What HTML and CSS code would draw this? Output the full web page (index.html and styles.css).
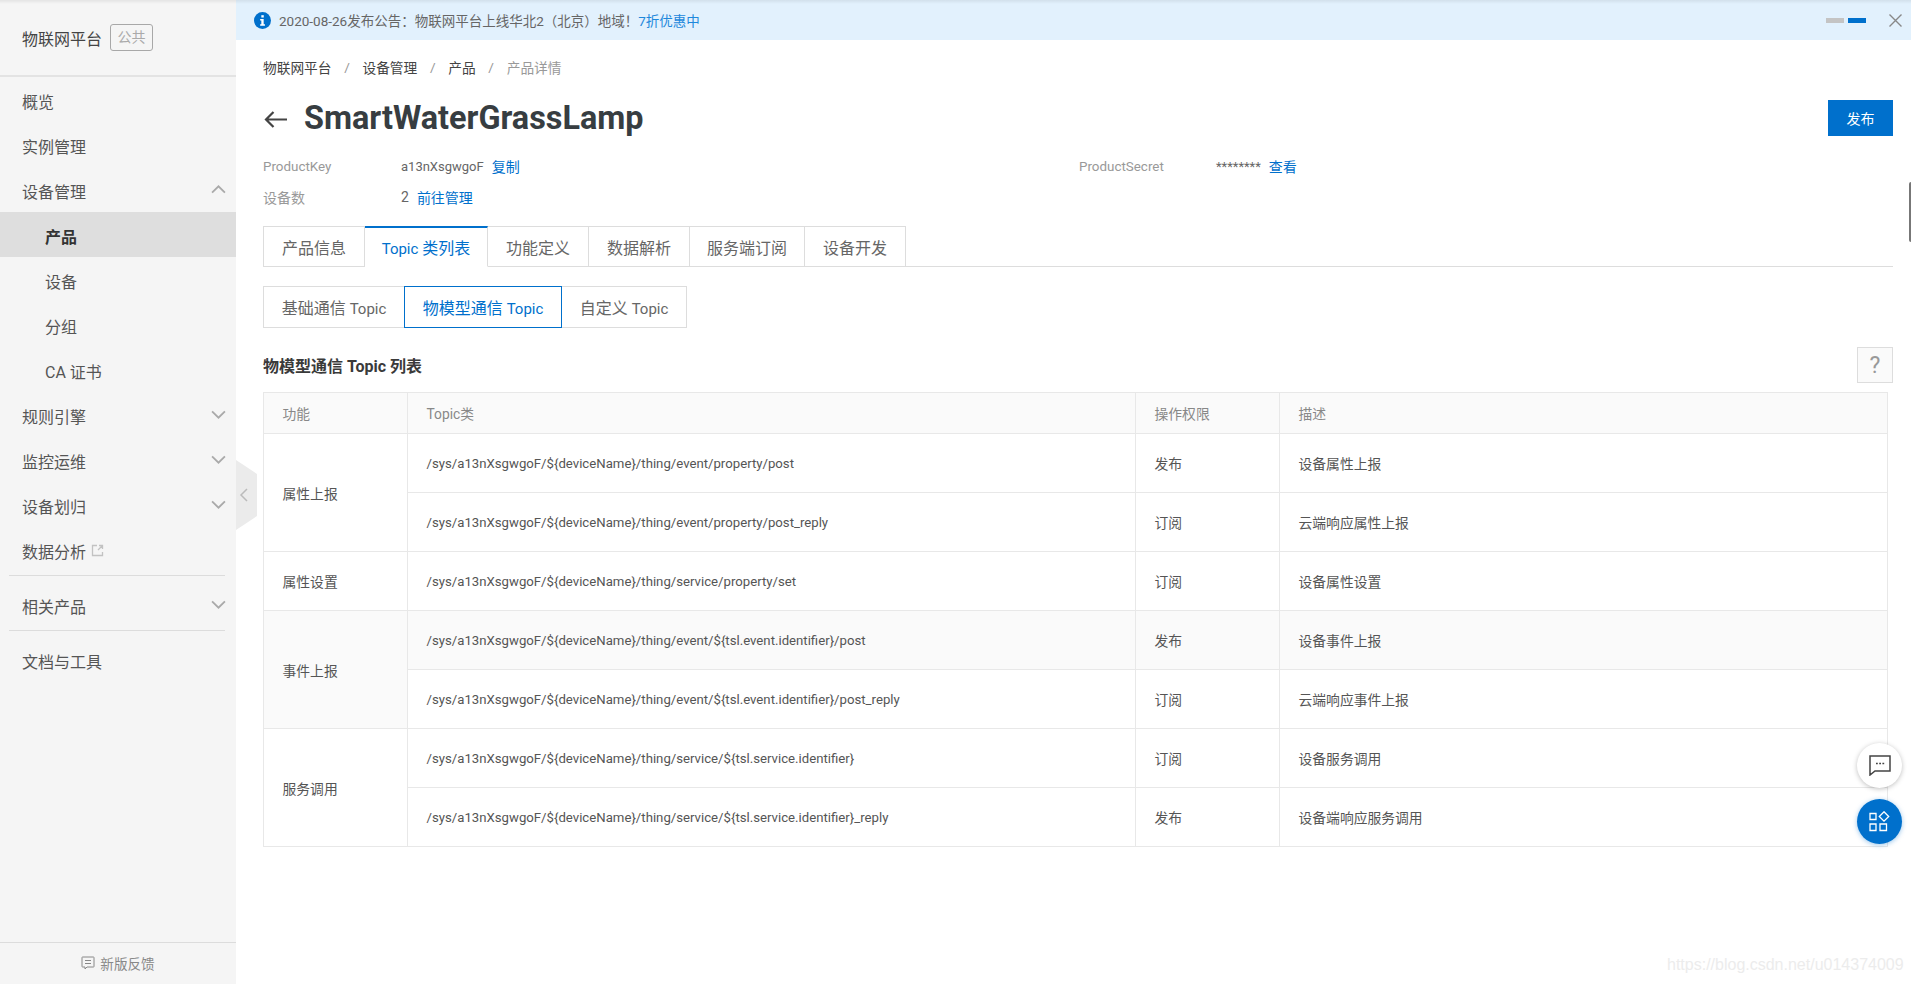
FILE: index.html
```html
<!DOCTYPE html>
<html lang="zh-CN">
<head>
<meta charset="utf-8">
<title>物联网平台</title>
<link rel="stylesheet" href="styles.css">
</head>
<body>
<div class="app">
  <aside class="sidebar">
    <div class="side-head"><span class="side-title">物联网平台</span><span class="side-badge">公共</span></div>
    <nav class="side-nav">
      <a class="nav-item">概览</a>
      <a class="nav-item">实例管理</a>
      <a class="nav-item">设备管理<svg class="chev" viewBox="0 0 14 8"><path d="M1 7l6-6 6 6"/></svg></a>
      <a class="nav-item sub active">产品</a>
      <a class="nav-item sub">设备</a>
      <a class="nav-item sub">分组</a>
      <a class="nav-item sub">CA 证书</a>
      <a class="nav-item">规则引擎<svg class="chev" viewBox="0 0 14 8"><path d="M1 1l6 6 6-6"/></svg></a>
      <a class="nav-item">监控运维<svg class="chev" viewBox="0 0 14 8"><path d="M1 1l6 6 6-6"/></svg></a>
      <a class="nav-item">设备划归<svg class="chev" viewBox="0 0 14 8"><path d="M1 1l6 6 6-6"/></svg></a>
      <a class="nav-item">数据分析<svg class="ext" viewBox="0 0 13 13"><path d="M6 1.500H1.500v10h10V8M8 1.500h3.500V5M11.500 1.500L7 6"/></svg></a>
      <div class="side-line"></div>
      <a class="nav-item">相关产品<svg class="chev" viewBox="0 0 14 8"><path d="M1 1l6 6 6-6"/></svg></a>
      <div class="side-line"></div>
      <a class="nav-item">文档与工具</a>
    </nav>
    <div class="feedback"><svg viewBox="0 0 14 14"><path d="M1.500 1h11a.500.500 0 0 1 .500.500v9a.500.500 0 0 1-.500.500H6l-2 2v-2H1.500a.500.500 0 0 1-.500-.500v-9a.500.500 0 0 1 .500-.500zM4 4.500h6M4 7.500h6"/></svg>新版反馈</div>
  </aside>
  <main class="main">
    <div class="notice">
      <svg class="info" viewBox="0 0 16 16"><circle cx="8" cy="8" r="8"/><rect x="6.900" y="3" width="2.300" height="2.200"/><path d="M5.800 6.600h3.300v5h1.200v1.400H5.800v-1.400h1.100V8H5.800z"/></svg>
      <span class="notice-text">2020-08-26发布公告：物联网平台上线华北2（北京）地域！<a class="link notice-link">7折优惠中</a></span>
      <span class="pager"><i></i><i class="on"></i></span>
      <svg class="close" viewBox="0 0 13 13"><path d="M.5.500l12 12M12.500.500l-12 12"/></svg>
    </div>
    <div class="content">
      <div class="crumbs"><span>物联网平台</span><em>/</em><span>设备管理</span><em>/</em><span>产品</span><em>/</em><span class="cur">产品详情</span></div>
      <div class="title-row">
        <svg class="back" viewBox="0 0 23 17"><path d="M23 8.500H2M9.500 1L2 8.500 9.500 16"/></svg>
        <h1>SmartWaterGrassLamp</h1>
        <button class="publish">发布</button>
      </div>
      <div class="meta">
        <div class="meta-row"><span class="meta-label lat">ProductKey</span><span class="meta-value">a13nXsgwgoF</span><a class="link gap">复制</a></div>
        <div class="meta-row"><span class="meta-label secret lat">ProductSecret</span><span class="meta-value">********</span><a class="link gap">查看</a></div>
        <div class="meta-row"><span class="meta-label">设备数</span><span class="meta-num">2</span><a class="link gap">前往管理</a></div>
      </div>
      <div class="tabs">
        <a class="tab w1">产品信息</a>
        <a class="tab w2 active"><span><span class="lat-word">Topic</span> 类列表</span></a>
        <a class="tab w3">功能定义</a>
        <a class="tab w4">数据解析</a>
        <a class="tab w5">服务端订阅</a>
        <a class="tab w6">设备开发</a>
      </div>
      <div class="subtabs">
        <a class="subtab s1"><span>基础通信 <span class="lat-word">Topic</span></span></a>
        <a class="subtab s2 active"><span>物模型通信 <span class="lat-word">Topic</span></span></a>
        <a class="subtab s3"><span>自定义 <span class="lat-word">Topic</span></span></a>
      </div>
      <div class="list-head"><h2>物模型通信 Topic 列表</h2><span class="help">?</span></div>
      <table class="grid">
        <colgroup><col class="c1"><col class="c2"><col class="c3"><col class="c4"></colgroup>
        <thead><tr><th>功能</th><th>Topic类</th><th>操作权限</th><th>描述</th></tr></thead>
        <tbody>
          <tr><td rowspan="2">属性上报</td><td class="path">/sys/a13nXsgwgoF/${deviceName}/thing/event/property/post</td><td>发布</td><td>设备属性上报</td></tr>
          <tr><td class="path">/sys/a13nXsgwgoF/${deviceName}/thing/event/property/post_reply</td><td>订阅</td><td>云端响应属性上报</td></tr>
          <tr><td>属性设置</td><td class="path">/sys/a13nXsgwgoF/${deviceName}/thing/service/property/set</td><td>订阅</td><td>设备属性设置</td></tr>
          <tr class="hover"><td rowspan="2">事件上报</td><td class="path">/sys/a13nXsgwgoF/${deviceName}/thing/event/${tsl.event.identifier}/post</td><td>发布</td><td>设备事件上报</td></tr>
          <tr><td class="path">/sys/a13nXsgwgoF/${deviceName}/thing/event/${tsl.event.identifier}/post_reply</td><td>订阅</td><td>云端响应事件上报</td></tr>
          <tr><td rowspan="2">服务调用</td><td class="path">/sys/a13nXsgwgoF/${deviceName}/thing/service/${tsl.service.identifier}</td><td>订阅</td><td>设备服务调用</td></tr>
          <tr><td class="path">/sys/a13nXsgwgoF/${deviceName}/thing/service/${tsl.service.identifier}_reply</td><td>发布</td><td>设备端响应服务调用</td></tr>
        </tbody>
      </table>
    </div>
  </main>
</div>
<div class="collapse"><svg viewBox="0 0 9 14"><path d="M8 1L2 7l6 6"/></svg></div>
<div class="top-shade"></div>
<div class="scroll-thumb"></div>
<button class="fab chat"><svg viewBox="0 0 22 21"><path d="M1 1h20v15H6l-5 4zM7 8.500h1.800M10.200 8.500H12M13.400 8.500h1.800"/></svg></button>
<button class="fab apps"><svg viewBox="0 0 22 21"><path d="M1 2.500h6v6H1zM1 13h6v6.500H1zM11 13h6.500v6.500H11zM15 .8l4.700 4.700L15 10.200l-4.700-4.700z"/></svg></button>
<div class="watermark">https://blog.csdn.net/u014374009</div>
</body>
</html>
```

FILE: styles.css
```css
* { box-sizing: border-box; }
html, body { margin: 0; height: 100%; overflow: hidden; background: #fff; }
body { font-family: Roboto, "Noto Sans CJK SC", sans-serif; font-weight: 400; color: #555; font-size: 14px; }
a { text-decoration: none; }
.link { color: #0070cc; }

.app { display: flex; height: 984px; }

.sidebar { width: 236px; flex: none; background: #f5f5f5; display: flex; flex-direction: column; }
.side-head { height: 77px; border-bottom: 2px solid #e3e3e3; padding: 0 0 0 22px; display: flex; align-items: center; gap: 8px; }
.side-title { font-size: 16px; color: #444; }
.side-badge { width: 43px; height: 27px; border: 1px solid #a8a8a8; border-radius: 3px; color: #aaa; font-size: 14px; line-height: 25px; text-align: center; }
.side-nav { flex: 1; }
.nav-item { display: flex; align-items: center; height: 45px; padding: 2px 0 0 22px; font-size: 16px; color: #555; position: relative; }
.nav-item.sub { padding-left: 45px; }
.nav-item.active { background: #dedede; color: #333; font-weight: 700; }
.chev { width: 15px; height: 9px; margin-left: auto; margin-right: 10px; margin-top: -2px; fill: none; stroke: #aaa; stroke-width: 1.700; }
.ext { width: 13px; height: 13px; margin-left: 5px; fill: none; stroke: #c2c2c2; stroke-width: 1.300; }
.side-line { height: 1px; margin: 3px 11px 6px 9px; background: #dcdcdc; }
.feedback { height: 42px; border-top: 1px solid #dcdcdc; padding-bottom: 2px; display: flex; align-items: center; justify-content: center; gap: 5px; color: #888; font-size: 13.600px; }
.feedback svg { width: 14px; height: 14px; fill: none; stroke: #888; stroke-width: 1; }

.main { flex: 1; min-width: 0; display: flex; flex-direction: column; }
.notice { height: 40px; flex: none; background: #e2f1fd; display: flex; align-items: center; padding-left: 18px; }
.info { width: 17px; height: 17px; fill: #0070cc; margin-right: 8px; }
.info rect, .info path { fill: #fff; }
.notice-text { color: #666; font-size: 13.500px; }
.notice-link { color: #1e88dc; }
.pager { margin-left: auto; display: flex; gap: 4px; margin-right: 23px; }
.pager i { width: 18px; height: 5px; background: #c4c4c4; }
.pager i.on { background: #0070cc; }
.close { width: 13px; height: 13px; margin-right: 9px; fill: none; stroke: #888; stroke-width: 1.400; }

.content { flex: 1; padding: 0 18px 0 27px; }
.crumbs { height: 54px; margin-bottom: 2px; display: flex; align-items: center; font-size: 13.700px; color: #444; }
.crumbs em { font-style: normal; color: #999; margin: 0 12.700px; }
.crumbs .cur { color: #999; }
.title-row { height: 44px; display: flex; align-items: center; }
.back { width: 23px; height: 17px; fill: none; stroke: #444; stroke-width: 2.200; margin: 2px 17px 0 1px; }
h1 { margin: 0; font-size: 32.400px; font-weight: 700; color: #373d41; line-height: 44px; }
.publish { margin-left: auto; width: 65px; height: 36px; background: #0070cc; color: #fff; border: 0; padding: 0; font: inherit; font-size: 14px; }
.meta { display: grid; grid-template-columns: 816px 1fr; row-gap: 11px; margin-top: 16px; height: 70px; align-content: start; }
.meta-row { display: flex; align-items: center; height: 20px; color: #666; font-size: 14px; }
.meta-label { width: 138px; color: #999; font-size: 14px; }
.meta-label.lat { font-size: 13.400px; }
.meta-label.secret { width: 137px; }
.meta-value { font-size: 13px; }
.meta-num { font-size: 14px; }
.gap { margin-left: 8px; }
.lat-word { font-size: 15px; }
.tabs { display: flex; height: 41px; border-bottom: 1px solid #ddd; }
.tab { height: 41px; border: 1px solid #ddd; border-left: 0; font-size: 16px; color: #666; display: flex; align-items: center; justify-content: center; }
.tab.w1 { width: 102px; border-left: 1px solid #ddd; }
.tab.w2 { width: 123px; }
.tab.w3 { width: 101px; }
.tab.w4 { width: 101px; }
.tab.w5 { width: 115px; }
.tab.w6 { width: 101px; }
.tab.active { color: #0070cc; border-top: 2px solid #0070cc; border-bottom-color: #fff; }
.subtabs { display: flex; height: 42px; margin-top: 19px; }
.subtab { height: 42px; border: 1px solid #ddd; font-size: 16px; color: #666; display: flex; align-items: center; justify-content: center; }
.subtab.s1 { width: 141px; border-right: 0; }
.subtab.s2 { width: 158px; }
.subtab.s3 { width: 125px; border-left: 0; }
.subtab.active { color: #0070cc; border-color: #0070cc; }
.list-head { height: 36px; margin-top: 19px; display: flex; align-items: center; justify-content: space-between; }
h2 { margin: 0; font-size: 16px; font-weight: 700; color: #3a3a3a; }
.help { width: 36px; height: 36px; background: #fafafa; border: 1px solid #ddd; color: #999; font-size: 23px; display: flex; align-items: center; justify-content: center; }
.grid { width: 1625px; margin-top: 9px; border-collapse: collapse; table-layout: fixed; }
.c1 { width: 144px; }
.c2 { width: 728px; }
.c3 { width: 144px; }
.grid th, .grid td { border: 1px solid #e8e8e8; padding: 0 0 0 18.500px; text-align: left; font-size: 13.800px; font-weight: 400; color: #555; height: 59px; white-space: nowrap; }
.grid th { height: 41px; background: #fafafa; color: #888; }
.grid td.path { font-size: 13.200px; }
.grid tr.hover td { background: #fafafa; }

.collapse { position: absolute; left: 236px; top: 460px; width: 21px; height: 70px; background: #ebebeb; clip-path: polygon(0 0, 100% 20%, 100% 80%, 0 100%); display: flex; align-items: center; justify-content: center; }
.collapse svg { width: 9px; height: 14px; fill: none; stroke: #bbb; stroke-width: 1.500; margin-right: 6px; }
.top-shade { position: absolute; left: 0; top: 0; right: 0; height: 4px; background: linear-gradient(rgba(0,0,0,.07), rgba(0,0,0,0)); pointer-events: none; }
.scroll-thumb { position: absolute; right: 0; top: 182px; width: 2px; height: 60px; background: #777; border-radius: 2px 0 0 2px; }
.fab { position: absolute; left: 1857px; width: 45px; height: 45px; border-radius: 50%; border: 0; padding: 0; display: flex; align-items: center; justify-content: center; }
.fab svg { width: 22px; height: 21px; fill: none; }
.fab.chat { top: 743px; background: #fff; box-shadow: 0 1px 5px rgba(0,0,0,.25); }
.fab.chat svg { stroke: #444; stroke-width: 1.500; }
.fab.apps { top: 799px; background: #0070cc; box-shadow: 0 1px 5px rgba(0,112,204,.4); }
.fab.apps svg { stroke: #fff; stroke-width: 1.300; }
.watermark { position: absolute; left: 1667px; top: 956px; font-family: "Liberation Sans", sans-serif; font-size: 16px; color: #ececec; white-space: nowrap; }
```
